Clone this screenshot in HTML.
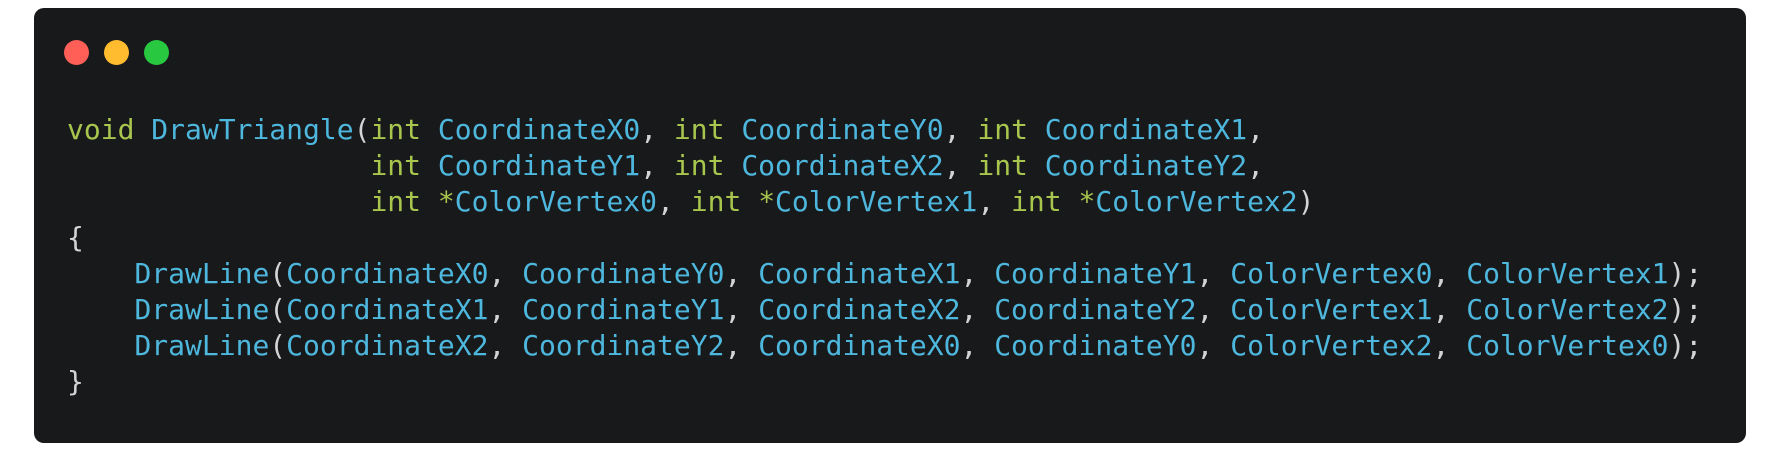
<!DOCTYPE html>
<html><head><meta charset="utf-8"><style>
html,body{margin:0;padding:0;background:#fff;width:1780px;height:452px;overflow:hidden}
.card{position:absolute;left:34px;top:8px;width:1712px;height:435px;background:#18191b;border-radius:10px}
.dot{position:absolute;top:31.5px;width:25px;height:25px;border-radius:50%}
pre{position:absolute;left:33px;top:104px;margin:0;font-family:"DejaVu Sans Mono","Liberation Mono",monospace;font-size:28px;line-height:36px;color:#d4d4d4}
.k{color:#a8c64e}.f{color:#4eb7dd}
</style></head><body>
<div class="card">
<div class="dot" style="left:29.5px;background:#ff5f57"></div>
<div class="dot" style="left:69.5px;background:#febc2e"></div>
<div class="dot" style="left:109.5px;background:#28c840"></div>
<pre><span class="k">void</span> <span class="f">DrawTriangle</span>(<span class="k">int</span> <span class="f">CoordinateX0</span>, <span class="k">int</span> <span class="f">CoordinateY0</span>, <span class="k">int</span> <span class="f">CoordinateX1</span>,
                  <span class="k">int</span> <span class="f">CoordinateY1</span>, <span class="k">int</span> <span class="f">CoordinateX2</span>, <span class="k">int</span> <span class="f">CoordinateY2</span>,
                  <span class="k">int</span> <span class="k">*</span><span class="f">ColorVertex0</span>, <span class="k">int</span> <span class="k">*</span><span class="f">ColorVertex1</span>, <span class="k">int</span> <span class="k">*</span><span class="f">ColorVertex2</span>)
{
    <span class="f">DrawLine</span>(<span class="f">CoordinateX0</span>, <span class="f">CoordinateY0</span>, <span class="f">CoordinateX1</span>, <span class="f">CoordinateY1</span>, <span class="f">ColorVertex0</span>, <span class="f">ColorVertex1</span>);
    <span class="f">DrawLine</span>(<span class="f">CoordinateX1</span>, <span class="f">CoordinateY1</span>, <span class="f">CoordinateX2</span>, <span class="f">CoordinateY2</span>, <span class="f">ColorVertex1</span>, <span class="f">ColorVertex2</span>);
    <span class="f">DrawLine</span>(<span class="f">CoordinateX2</span>, <span class="f">CoordinateY2</span>, <span class="f">CoordinateX0</span>, <span class="f">CoordinateY0</span>, <span class="f">ColorVertex2</span>, <span class="f">ColorVertex0</span>);
}</pre>
</div>
</body></html>
